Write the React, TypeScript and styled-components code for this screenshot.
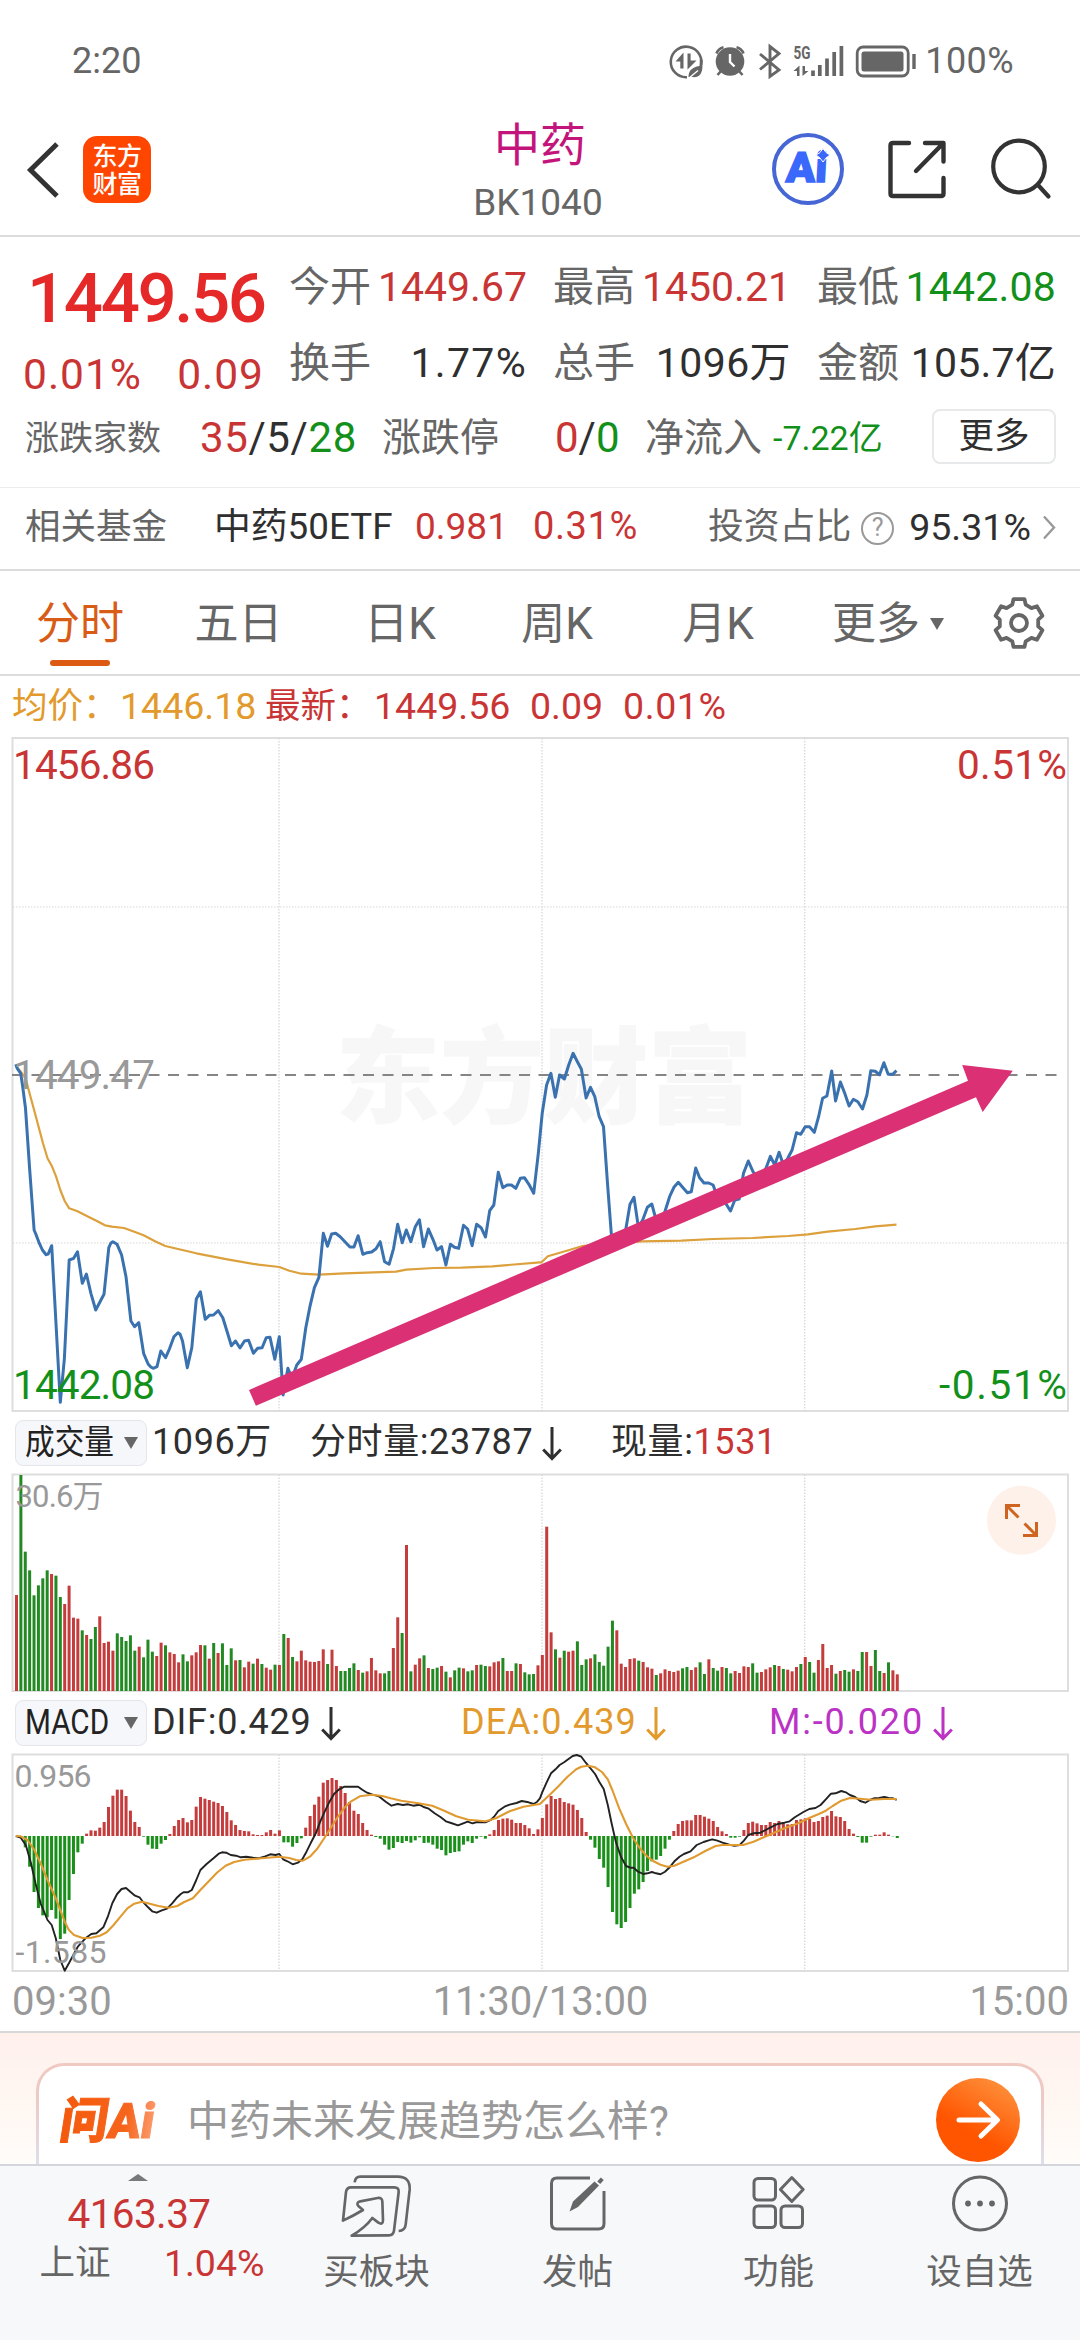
import React from "react";
import styled, { createGlobalStyle } from "styled-components";

const RED = "#c93434";
const GREEN = "#12901a";
const DARK = "#2f2f2f";
const GREY = "#666";
const MUTE = "#999";
const ORANGE = "#e29a2c";
const FONT = `Roboto, "Noto Sans CJK SC", sans-serif`;

const GlobalStyle = createGlobalStyle`
  * { box-sizing: border-box; }
  body { margin: 0; background: #fff; font-family: ${FONT}; }
  svg { display: block; }
`;

/* ---------- shared ---------- */

const Screen = styled.div`
  width: 1080px;
  height: 2340px;
  display: flex;
  flex-direction: column;
  background: #fff;
  color: ${DARK};
  overflow: hidden;
  white-space: nowrap;
  line-height: 1.2;
`;

interface InkProps {
  $c?: string;
  $size?: number;
  $ls?: number;
  $ml?: number;
  $w?: number;
}

const Ink = styled.span<InkProps>`
  color: ${(p) => p.$c ?? "inherit"};
  ${(p) => (p.$size ? `font-size: ${p.$size}px;` : "")}
  ${(p) => (p.$ls !== undefined ? `letter-spacing: ${p.$ls}px;` : "")}
  margin-left: ${(p) => p.$ml ?? 0}px;
  ${(p) => (p.$w ? `width: ${p.$w}px; flex: none;` : "")}
`;

/* ---------- status bar ---------- */

const StatusBar = styled.div`
  height: 100px;
  padding: 24px 66px 0 72px;
  display: flex;
  align-items: center;
  justify-content: space-between;
  color: ${GREY};
  font-size: 36px;
`;

const StatusIcons = styled.div`
  display: flex;
  align-items: center;
`;

const SystemIcons = () => (
  <svg width="254" height="40" viewBox="665 42 254 40" fill="none" stroke={GREY}>
    <path d="M700.5 67A15.3 15.3 0 1 0 687 77.200M701 65V58" strokeWidth="2.600" />
    <path d="M701.300 60A15.400 15.400 0 0 1 701 65" strokeWidth="2.600" />
    <path d="M675.500 61.500L683.500 52.500V68.500H680.300V61.500Z M687.500 53.500H690.600V60.500H696.500L687.500 69.500Z" fill={GREY} stroke="none" />
    <path d="M688.500 77C688.500 69 694 66.500 702.500 65.500C702.500 74 699 78 692 77Z" fill={GREY} stroke="none" />
    <path d="M688.500 78.500L698 70.500" stroke="#fff" strokeWidth="1.300" />
    <circle cx="730" cy="61.500" r="14.300" fill={GREY} stroke="none" />
    <path d="M716.500 53.500A10 10 0 0 1 723.500 47.200M743.500 53.500A10 10 0 0 0 736.500 47.200M721 71L717.500 75M739 71L742.500 75" strokeWidth="2.600" />
    <path d="M730 54V62L734.500 66.500" stroke="#fff" strokeWidth="2.400" />
    <path d="M760 54L779 70L770 76.500V46.500L779 53.500L760 69.500" strokeWidth="2.900" />
    <text x="793.500" y="59" fontFamily={FONT} fontSize="18.500" fontWeight="700" fill={GREY} stroke="none" textLength="17" lengthAdjust="spacingAndGlyphs">5G</text>
    <path d="M793.500 71L799.500 65.500V76H797V71Z M802.500 66H805V71H808.500L802.500 76Z" fill={GREY} stroke="none" />
    <path d="M813 70.500V76M819.800 65V76M827 58.500V76M834.200 52V76M841.400 46V76" strokeWidth="3.700" />
    <rect x="857.200" y="47" width="51" height="29" rx="6" strokeWidth="2.800" />
    <rect x="861.500" y="51.500" width="42" height="20" rx="2.500" fill={GREY} stroke="none" />
    <path d="M914 54V69" strokeWidth="3.400" />
  </svg>
);

/* ---------- header ---------- */

const Header = styled.header`
  height: 137px;
  border-bottom: 2px solid #dcdcdc;
  display: grid;
  grid-template-columns: 380px 1fr 380px;
`;

const HeaderSide = styled.div<{ $end?: boolean }>`
  display: flex;
  align-items: center;
  height: 137px;
  justify-content: ${(p) => (p.$end ? "flex-end" : "flex-start")};
  padding: ${(p) => (p.$end ? "0 28px 0 0" : "2px 0 0 24px")};
  gap: ${(p) => (p.$end ? 42 : 20)}px;
`;

const TitleStack = styled.div`
  padding-top: 16px;
  display: flex;
  flex-direction: column;
  align-items: center;
`;

const Title = styled.div`
  font-size: 46px;
  line-height: 58px;
  color: #c3147c;
`;

const Code = styled.div`
  font-size: 37px;
  line-height: 58px;
  color: ${GREY};
  margin-left: -4px;
`;

const AppBadge = styled.div`
  width: 68px;
  height: 67px;
  border-radius: 14px;
  background: #ff4600;
  color: #fff;
  display: flex;
  flex-direction: column;
  justify-content: center;
  align-items: center;
  font-size: 25px;
  line-height: 28px;
  font-weight: 500;
  letter-spacing: -0.5px;
  padding-top: 3px;
`;

const BackIcon = () => (
  <svg width="39" height="58" viewBox="0 0 39 58" fill="none" stroke="#333" strokeWidth="5">
    <path d="M33 3L6.500 29L33 55" />
  </svg>
);

const AiIcon = () => (
  <svg width="72" height="72" viewBox="0 0 72 72">
    <circle cx="36" cy="36" r="34" fill="none" stroke="#4566d4" strokeWidth="4" />
    <g transform="translate(13.500 49) skewX(-3)">
      <text x="0" y="0" fontFamily={FONT} fontSize="42" fontWeight="900" fill="#3a68fb" stroke="#3a68fb" strokeWidth="1.500" textLength="41" lengthAdjust="spacingAndGlyphs">Ai</text>
    </g>
    <path d="M51 15.500L54 19.500L58 22L54 25L51 29L48 25L44 22L48 19.500Z" fill="#3a68fb" stroke="#fff" strokeWidth="1" />
  </svg>
);

const ShareIcon = () => (
  <svg width="62" height="62" viewBox="0 0 62 62" fill="none" stroke="#333" strokeWidth="4.400" strokeLinecap="round" strokeLinejoin="round">
    <path d="M23 5H7Q4.500 5 4.500 7.500V55.500Q4.500 58 7 58H55Q57.500 58 57.500 55.500V40" />
    <path d="M39 5H57.500V23.500M57 5.500L30 33" />
  </svg>
);

const SearchIcon = () => (
  <svg width="62" height="62" viewBox="0 0 62 62" fill="none" stroke="#333" strokeWidth="4.200" strokeLinecap="round">
    <circle cx="29" cy="28.500" r="25.800" />
    <path d="M48 47L58.500 58.500" />
  </svg>
);

/* ---------- quote panel ---------- */

const Quote = styled.section`
  height: 251px;
  padding: 13px 24px 0 25px;
  border-bottom: 1px solid #ececec;
`;

const QuoteTop = styled.div`
  display: grid;
  grid-template-columns: 264px 1fr;
  height: 151px;
`;

const PriceBlock = styled.div`
  padding-top: 11px;
  color: ${RED};
`;

const Price = styled.div`
  height: 76px;
  line-height: 76px;
  margin-left: 2px;
  font-size: 69px;
  font-weight: 500;
  color: #e52828;
  letter-spacing: -2.400px;
`;

const Change = styled.div`
  width: 241px;
  margin-left: -2px;
  display: flex;
  justify-content: space-between;
  font-size: 42.500px;
  line-height: 75px;
  letter-spacing: 1px;
`;

const Stats = styled.div`
  display: grid;
  grid-template-columns: 238px 238px 239px;
  column-gap: 26px;
  grid-auto-rows: 75.500px;
`;

const Stat = styled.div<{ $c: string }>`
  display: flex;
  justify-content: space-between;
  align-items: center;
  font-size: 41px;
  color: ${(p) => p.$c};
`;

const StatLabel = styled.span`
  font-size: 41px;
  color: ${GREY};
`;

const Breadth = styled.div`
  display: grid;
  grid-template-columns: 175px 182px 173px 90px 128px 159px 124px;
  align-items: center;
  height: 74px;
  font-size: 42px;
`;

const BreadthLabel = styled.span<{ $size: number }>`
  font-size: ${(p) => p.$size}px;
  color: ${GREY};
`;

const MoreButton = styled.button`
  height: 55px;
  border: 2px solid #e8e9eb;
  border-radius: 8px;
  background: #fff;
  font-family: inherit;
  font-size: 35.500px;
  line-height: 50px;
  color: ${DARK};
  padding: 0;
  margin-top: -4px;
`;

/* ---------- fund row ---------- */

const Fund = styled.section`
  height: 83px;
  border-bottom: 2px solid #dcdcdc;
  padding: 0 23px 3px 25px;
  display: flex;
  align-items: center;
  font-size: 37.500px;
`;

const HelpIcon = styled.span`
  width: 33px;
  height: 33px;
  margin: 3px 0 0 10px;
  border: 2.500px solid ${MUTE};
  border-radius: 50%;
  color: ${MUTE};
  font-size: 25px;
  line-height: 28px;
  text-align: center;
`;

/* ---------- period tabs ---------- */

const Tabs = styled.nav`
  height: 105px;
  border-bottom: 2px solid #dcdcdc;
  display: grid;
  grid-template-columns: 160px 157px 166px 148px 174px 166px 1fr;
  font-size: 44px;
  color: ${GREY};
`;

const Tab = styled.div<{ $active?: boolean }>`
  height: 103px;
  display: flex;
  flex-direction: column;
  align-items: center;
  color: ${(p) => (p.$active ? "#d85c16" : GREY)};
  line-height: 106px;
  &::after {
    content: "";
    display: ${(p) => (p.$active ? "block" : "none")};
    width: 60px;
    height: 6px;
    margin-top: -17px;
    border-radius: 3px;
    background: #dc5a14;
  }
`;

const MoreTab = styled.div`
  display: flex;
  align-items: center;
  justify-content: center;
  gap: 10px;
  height: 103px;
  line-height: 103px;
  padding-top: 3px;
`;

const Caret = styled.i<{ $w: number; $h: number; $up?: boolean; $c?: string }>`
  width: 0;
  height: 0;
  border-left: ${(p) => p.$w / 2}px solid transparent;
  border-right: ${(p) => p.$w / 2}px solid transparent;
  ${(p) => (p.$up ? "border-bottom" : "border-top")}: ${(p) => p.$h}px solid ${(p) => p.$c ?? GREY};
`;

const GearSlot = styled.div`
  padding-top: 23px;
  padding-left: 19px;
`;

const gearOutline = (() => {
  const pts: string[] = [];
  for (let i = 0; i < 6; i++) {
    const steps: [number, number][] = [[-20, 19.5], [-13, 24.5], [13, 24.5], [20, 19.5]];
    for (const [off, r] of steps) {
      const a = ((i * 60 - 90 + off) * Math.PI) / 180;
      pts.push(`${(29 + r * Math.cos(a)).toFixed(1)},${(29 + r * Math.sin(a)).toFixed(1)}`);
    }
  }
  return pts.join(" ");
})();

const GearIcon = () => (
  <svg width="58" height="58" viewBox="0 0 58 58" fill="none" stroke={GREY} strokeWidth="3.800" strokeLinejoin="round">
    <polygon points={gearOutline} />
    <circle cx="29" cy="29" r="8" />
  </svg>
);

/* ---------- chart legend ---------- */

const Legend = styled.div`
  height: 61px;
  padding: 0 0 0 12px;
  display: flex;
  align-items: center;
  font-size: 37.500px;
  color: ${RED};
`;

const IndicatorBar = styled.div<{ $h: number }>`
  height: ${(p) => p.$h}px;
  padding: 0 0 0 15px;
  display: flex;
  align-items: center;
  font-size: 36px;
  letter-spacing: 0.600px;
`;

const Picker = styled.div`
  width: 132px;
  height: 46px;
  margin-right: 5px;
  flex: none;
  display: flex;
  align-items: center;
  justify-content: space-between;
  padding: 0 8px 0 9px;
  border: 1.500px solid #e4e6ea;
  border-radius: 8px;
  background: #f6f7fa;
  color: #222;
`;

const PickerLabel = styled.span`
  width: 88px;
  font-size: 34.500px;
  letter-spacing: 0;
  transform: scaleX(0.86);
  transform-origin: left center;
`;

const Reading = styled.div<{ $w: number; $c?: string; $ls?: number }>`
  width: ${(p) => p.$w}px;
  display: flex;
  align-items: center;
  color: ${(p) => p.$c ?? DARK};
  letter-spacing: ${(p) => p.$ls ?? 0.6}px;
`;

const ArrowSvg = styled.svg`
  margin-left: 9px;
  margin-top: 2px;
`;

const DownArrow = () => (
  <ArrowSvg width="20" height="36" viewBox="0 0 20 36" fill="none" stroke="currentColor" strokeWidth="3">
    <path d="M10 1V32M1.200 23.500L10 32.500L18.800 23.500" />
  </ArrowSvg>
);

/* ---------- chart data ---------- */

type Scale = { x0: number; kx: number };
const LEFT: Scale = { x0: 0, kx: 2.904 };
const RIGHT: Scale = { x0: 540, kx: 2.904 };
const RIGHT_PRICE: Scale = { x0: 460, kx: 2.529 };

const toPoints = (raw: string, s: Scale, dy: number) =>
  raw
    .trim()
    .split(/\s+/)
    .map((p) => {
      const [x, y] = p.split(",").map(Number);
      return `${(s.x0 + x / s.kx).toFixed(1)},${(dy + y / 3).toFixed(1)}`;
    })
    .join(" ");

const PRICE_A = `46,193 50,205 60,220 66,260 74,325 86,505 99,690 104,702 113,727 123,750 134,764 140,762 150,737 162,960 175,1207 187,1075 201,780 214,775 225,755 239,850 251,822 264,880 278,930 302,883 316,743 322,729 328,725 340,733 353,765 366,830 380,963 391,980 403,968 417,1060 430,1092 438,1101 445,1105 456,1100 467,1053 481,1073 492,1047 505,1010 517,998 523,1003 530,1023 544,1103 557,1043 570,897 582,875 596,958 608,946 620,945 634,932 647,953 660,997 672,1037 684,1023 697,1044 710,1023 722,1021 736,1060 748,1045 761,1043 773,1013 784,1012 798,1078 811,1010 822,1185 836,1105 848,1135 862,1095 875,1078 888,983 900,920 913,863 926,832 939,700 951,739 963,702 975,700 988,710 1003,727 1016,741 1028,741 1040,707 1054,763 1066,758 1079,756 1092,746 1104,725 1117,785 1130,793 1143,745 1155,673 1168,728 1180,690 1193,725 1206,680 1218,659 1230,740 1244,687 1257,718 1269,750 1282,740 1295,795 1308,733 1320,742 1332,745 1346,676 1358,687 1371,737 1384,673 1397,683 1410,711 1422,632 1434,615 1447,517 1460,563 1473,555 1485,555 1498,565 1511,535 1523,533 1536,553 1550,580`;
const PRICE_B = `198,460 208,340 219,255 230,220 241,292 252,225 264,237 275,195 286,160 297,185 307,208 319,294 330,262 341,290 352,350 363,380 373,550 383,705 395,730 407,725 419,690 430,613 440,592 451,680 462,660 474,622 485,612 496,660 508,665 519,632 530,590 541,562 552,547 563,562 575,578 585,575 596,504 606,533 617,549 629,549 640,555 651,590 662,600 673,612 684,633 695,600 706,597 717,520 729,483 741,515 752,530 763,530 774,505 785,469 796,495 807,457 818,495 829,475 840,450 851,398 862,403 873,380 884,380 896,397 907,350 917,295 928,288 940,213 950,303 962,246 973,280 984,318 995,298 1006,305 1018,327 1029,285 1039,212 1050,214 1061,224 1072,188 1083,223 1094,223 1104,212`;
const AVG_A = `46,197 60,215 74,235 99,330 125,430 138,475 150,497 163,530 175,570 188,603 201,625 225,634 252,648 280,662 305,676 325,680 360,684 390,695 417,706 450,724 480,738 520,748 570,760 660,778 750,794 811,801 840,812 875,821 926,824 1000,820 1150,815 1180,809 1260,804 1340,803 1430,799 1568,787`;
const AVG_B = `206,787 222,769 270,752 310,738 370,730 460,724 560,722 640,717 740,714 830,708 880,703 930,695 1000,687 1050,679 1104,674`;

const DIF_A = `46,438 60,443 75,465 90,520 103,580 118,640 138,690 150,705 162,745 175,810 188,842 200,820 226,770 250,743 265,732 280,730 300,712 313,680 326,640 340,612 353,597 366,594 380,607 392,617 405,622 417,638 430,652 442,664 455,668 468,662 485,656 500,640 512,625 525,612 533,607 545,607 557,600 570,570 582,540 600,522 620,505 635,491 645,487 657,488 670,495 685,497 700,502 715,500 735,503 750,505 770,499 785,493 800,495 811,492 822,508 835,514 850,523 865,518 878,508 890,485 902,460 917,430 930,395 943,365 957,335 970,312 985,298 1000,290 1020,290 1040,290 1052,299 1066,308 1080,313 1100,319 1120,335 1137,347 1155,342 1170,345 1185,343 1200,347 1218,344 1230,351 1245,356 1262,370 1280,382 1295,394 1310,399 1330,406 1345,400 1358,395 1372,400 1385,396 1410,397 1425,390 1435,380 1447,363 1465,350 1480,344 1500,339 1515,333 1535,337 1550,342 1560,335 1568,325`;
const DIF_B = `6,308 18,280 32,250 45,238 57,225 70,217 82,208 95,198 107,195 120,200 133,218 145,233 160,252 172,275 185,297 197,345 208,400 220,455 235,500 250,528 262,533 272,533 285,545 300,552 312,550 325,546 337,550 350,553 363,545 378,530 392,512 405,500 418,492 437,484 455,465 475,456 490,451 500,448 515,452 530,458 550,464 565,467 580,465 592,452 605,435 620,430 640,428 655,420 670,412 690,402 710,398 725,394 740,382 765,366 782,357 800,354 815,345 832,326 845,311 858,310 875,303 888,307 900,315 915,321 930,333 945,338 958,330 970,325 985,324 1000,321 1012,324 1025,325 1036,330`;
const DEA_A = `46,438 60,439 80,450 100,480 120,525 138,570 160,620 175,660 188,695 200,720 215,735 240,744 265,743 290,737 310,727 330,705 350,680 370,655 390,641 412,635 435,641 460,648 490,653 515,648 535,636 560,625 580,602 605,575 630,548 655,527 680,516 710,509 760,505 811,500 840,504 860,510 880,512 900,500 920,478 940,447 960,415 980,382 1000,353 1020,334 1045,319 1080,314 1110,318 1135,325 1165,332 1215,340 1255,347 1285,360 1325,379 1360,389 1410,394 1440,385 1480,364 1520,350 1568,342`;
const DEA_B = `10,332 30,313 55,287 80,260 105,238 120,230 140,227 160,232 180,246 197,268 210,300 230,355 250,402 270,443 290,475 310,498 330,514 350,524 370,530 390,527 420,514 450,500 480,483 510,468 530,465 590,465 620,455 650,442 680,428 710,415 750,400 780,385 810,372 830,362 850,348 875,332 900,324 930,326 960,329 1000,327 1036,327`;

const VOLUME = `r585 g225 g455 g511 g586 g556 g535 g511 r522 g527 g591 r612 r557 r653 r656 g691 r705 g717 g681 r649 r729 r725 r752 g700 g711 g723 g706 g752 r740 g772 g719 g755 r768 r728 g736 r757 r762 r787 g763 g784 r766 r757 r735 g736 r776 g729 r759 g730 g795 g745 r781 g780 r802 r785 g791 r776 g792 r803 r809 g794 r795 g702 r714 g771 r784 r752 r781 r785 r786 r783 r748 g792 r749 r798 g813 g813 g804 g790 r810 g818 r814 r774 r811 r820 g820 g813 r744 r652 g699 r435 g814 r794 r775 g766 r804 g807 g803 r798 g815 r832 g811 g803 r805 g814 g811 r795 g794 g798 r799 r787 r784 g774 r813 r813 g790 r792 g817 g823 g822 r796 r765 r380 r697 g748 r773 g752 r755 r752 g724 g795 g778 r775 g763 g786 g797 g740 g662 r691 r791 r801 r777 r775 g782 r786 r802 r806 g825 r820 r808 r813 r816 r812 g805 g801 r810 r802 g787 g822 r778 g804 g812 r801 g804 g820 r813 r819 r799 r801 g790 g818 r816 r808 r802 g795 r798 g807 r809 r814 r801 g792 r771 g786 g818 r780 r732 r804 r795 g821 r813 g810 g815 r808 g813 g756 r756 r798 g750 g813 r819 g787 r811 r823`.split(" ");

const MACD = [
  438, 444, 472, 530, 606, 654, 676, 682, 660, 686, 747, 731, 630, 552, 487, 461, 431, 421, 422, 413, 396, 351, 317, 299, 299, 318, 362, 396, 411, 440,
  464, 476, 477, 461, 450, 432, 408, 390, 384, 397, 390, 350, 321, 326, 330, 335, 339, 348, 366, 391, 405, 420, 423, 424, 433, 435, 435, 427, 420, 431,
  421, 457, 457, 470, 459, 445, 413, 378, 344, 320, 278, 270, 264, 270, 288, 309, 336, 362, 372, 399, 420, 434, 441, 446, 464, 479, 474, 456, 459, 453,
  458, 451, 442, 459, 458, 464, 476, 480, 496, 489, 486, 484, 464, 454, 459, 446, 440, 446, 433, 420, 390, 386, 385, 389, 399, 399, 405, 415, 432, 418,
  384, 343, 318, 327, 324, 336, 340, 344, 360, 384, 426, 449, 473, 507, 533, 591, 666, 703, 714, 696, 654, 611, 598, 576, 543, 514, 509, 498, 476, 449,
  423, 402, 393, 391, 391, 375, 375, 380, 386, 393, 411, 424, 432, 443, 443, 440, 420, 399, 395, 400, 405, 405, 396, 399, 393, 400, 403, 402, 390, 388,
  385, 387, 396, 393, 381, 377, 363, 379, 381, 393, 417, 431, 441, 458, 458, 440, 434, 434, 427, 434, 439, 444,
];

const barX = (i: number) => 16.5 + i * 4.382;
const GRID_X = [279, 542, 804.7];

const Frame = ({ top, bottom }: { top: number; bottom: number }) => (
  <g fill="none">
    <rect x="12.500" y={top} width="1055.500" height={bottom - top} stroke="#dedede" strokeWidth="2" />
    {GRID_X.map((x) => (
      <path key={x} d={`M${x} ${top}V${bottom}`} stroke="#d4d4d4" strokeWidth="1.200" strokeDasharray="1.500 1.500" />
    ))}
  </g>
);

interface LabelProps {
  x: number;
  y: number;
  w: number;
  size: number;
  fill: string;
  children: string;
}

const ChartLabel = ({ x, y, w, size, fill, children }: LabelProps) => (
  <text x={x} y={y} textLength={w} fontFamily={FONT} fontSize={size} fill={fill}>
    {children}
  </text>
);

const PriceChart = () => (
  <svg width="1080" height="675" viewBox="0 737 1080 675">
    <text x="336" y="1115" fontFamily={FONT} fontSize="104" fontWeight="900" fill="#f7f7f7" stroke="#f7f7f7" strokeWidth="1" textLength="416">
      东方财富
    </text>
    <Frame top={738} bottom={1411} />
    <path d="M13 907H1068M13 1243H1068" stroke="#d8d8d8" strokeWidth="1.200" strokeDasharray="1.500 1.500" />
    <path d="M12 1075H1060" stroke="#858585" strokeWidth="2" strokeDasharray="11 8.500" />
    <polyline points={`${toPoints(AVG_A, LEFT, 1000)} ${toPoints(AVG_B, RIGHT_PRICE, 1000)}`} fill="none" stroke="#dca03c" strokeWidth="2.200" strokeLinejoin="round" />
    <polyline points={`${toPoints(PRICE_A, LEFT, 1000)} ${toPoints(PRICE_B, RIGHT_PRICE, 1000)}`} fill="none" stroke="#3a72b0" strokeWidth="3" strokeLinejoin="round" />
    <ChartLabel x={13} y={779} w={142} size={40.5} fill={RED}>1456.86</ChartLabel>
    <ChartLabel x={957} y={779} w={110} size={40.5} fill={RED}>0.51%</ChartLabel>
    <ChartLabel x={13} y={1089} w={142} size={40.5} fill={MUTE}>1449.47</ChartLabel>
    <ChartLabel x={13} y={1399} w={142} size={40.5} fill={GREEN}>1442.08</ChartLabel>
    <ChartLabel x={939} y={1399} w={128} size={40.5} fill={GREEN}>-0.51%</ChartLabel>
    <polygon points="249,1390 968,1080.700 962.200,1065 1012.800,1070.700 982.700,1112 976,1097.300 255.900,1405.700" fill="#db3174" />
  </svg>
);

const VolumeChart = () => (
  <svg width="1080" height="219" viewBox="0 1473 1080 219">
    <Frame top={1474.5} bottom={1691} />
    {VOLUME.map((v, i) => {
      const h = (873 - Number(v.slice(1))) / 3;
      return <rect key={i} x={barX(i) - 1.5} y={1691 - h} width="3" height={h} fill={v[0] === "r" ? "#c43c3c" : "#238a23"} />;
    })}
    <ChartLabel x={15.5} y={1506.5} w={88} size={31} fill={MUTE}>30.6万</ChartLabel>
    <circle cx="1021.500" cy="1520.300" r="34.500" fill="#fef1e9" />
    <g fill="none" stroke="#cf6420" strokeWidth="3">
      <path d="M1020 1505.500H1006.500V1519M1007 1506L1018.500 1517.500" />
      <path d="M1023 1535.500H1036.500V1522M1036 1535L1024.500 1523.500" />
    </g>
  </svg>
);

const MacdChart = () => (
  <svg width="1080" height="219" viewBox="0 1753 1080 219">
    <Frame top={1754.5} bottom={1971} />
    {MACD.map((v, i) => {
      const h = Math.abs(v - 438) / 3;
      return <rect key={i} x={barX(i) - 1.5} y={v < 438 ? 1836 - h : 1836} width="3" height={h} fill={v < 438 ? "#c43c3c" : "#1a901a"} />;
    })}
    <polyline points={`${toPoints(DIF_A, LEFT, 1690)} ${toPoints(DIF_B, RIGHT, 1690)}`} fill="none" stroke="#222" strokeWidth="1.900" strokeLinejoin="round" />
    <polyline points={`${toPoints(DEA_A, LEFT, 1690)} ${toPoints(DEA_B, RIGHT, 1690)}`} fill="none" stroke="#e09a30" strokeWidth="2.100" strokeLinejoin="round" />
    <ChartLabel x={14.5} y={1786.5} w={77} size={32} fill={MUTE}>0.956</ChartLabel>
    <ChartLabel x={15.5} y={1962.5} w={91} size={32} fill={MUTE}>-1.585</ChartLabel>
  </svg>
);

const TimeAxis = styled.div`
  height: 61px;
  padding: 0 11px 0 12px;
  border-bottom: 2px solid #d8d8d8;
  display: grid;
  grid-template-columns: 1fr auto 1fr;
  align-items: center;
  font-size: 40px;
  color: ${MUTE};
  & > :last-child { text-align: right; }
`;

/* ---------- AI prompt ---------- */

const AskSection = styled.section`
  height: 131px;
  padding: 30px 36px 0;
  overflow: hidden;
  background: linear-gradient(#fff0ec, #fff7f2 55%, #fffcf9);
`;

const AskBorder = styled.div`
  height: 128px;
  padding: 3px;
  border-radius: 28px;
  background: linear-gradient(#f0c9c1, #eccac6 30%, #dddfec 80%);
`;

const AskBox = styled.div`
  height: 122px;
  padding: 0 21px 0 12px;
  border-radius: 25px;
  background: #fff;
  display: flex;
  align-items: flex-start;
`;

const AskText = styled.div`
  flex: 1;
  margin-left: 18px;
  font-size: 42px;
  line-height: 112px;
  color: ${MUTE};
`;

const SendButton = styled.div`
  width: 84px;
  height: 84px;
  margin-top: 12px;
  border-radius: 50%;
  background: linear-gradient(210deg, #ff9540 5%, #ff5500 62%);
`;

const AskLogo = () => (
  <svg width="118" height="110" viewBox="0 0 118 110">
    <defs>
      <linearGradient id="ask" x1="0" y1="0" x2="1" y2="0">
        <stop offset="0" stopColor="#f4590c" />
        <stop offset="0.700" stopColor="#f6651c" />
        <stop offset="1" stopColor="#fb9a6c" />
      </linearGradient>
    </defs>
    <g transform="translate(7 72) skewX(-9)">
      <text x="0" y="0" fontFamily={FONT} fontSize="49" fontWeight="900" fill="url(#ask)" stroke="url(#ask)" strokeWidth="1" textLength="94" lengthAdjust="spacingAndGlyphs">
        问Ai
      </text>
    </g>
  </svg>
);

/* ---------- bottom bar ---------- */

const BottomBar = styled.footer`
  flex: 1;
  border-top: 2px solid #d3d7dc;
  background: #f7f8fa;
  display: grid;
  grid-template-columns: 276px 201px 201px 201px 201px;
`;

const IndexCell = styled.div`
  display: flex;
  flex-direction: column;
  align-items: center;
  padding-top: 8px;
  color: ${RED};
  font-size: 40.500px;
`;

const IndexValue = styled.div`
  line-height: 52px;
  margin: 7px 0 0 2px;
  letter-spacing: -0.600px;
`;

const IndexRow = styled.div`
  width: 225px;
  margin-left: 28px;
  display: flex;
  justify-content: space-between;
  align-items: center;
  font-size: 37.500px;
  line-height: 47px;
`;

const Action = styled.div`
  display: flex;
  flex-direction: column;
  align-items: center;
  font-size: 35.500px;
  line-height: 52px;
  color: ${GREY};
`;

const IconSlot = styled.div`
  height: 80px;
  padding-top: 7px;
`;

const iconProps = { fill: "none", stroke: GREY, strokeWidth: 3, strokeLinejoin: "round" as const };

const TradeIcon = () => (
  <svg width="72" height="66" viewBox="958 335 216 198" {...iconProps} strokeWidth={8}>
    <path d="M964 478L973 392Q975 378 988 378H1118Q1132 378 1131 392L1117 508Q1115 522 1102 522L990 523Q1030 500 1052 470L1070 484Q1084 492 1084 476L1082 420Q1081 408 1068 410L1016 420Q1002 424 1010 434L1024 446Q994 464 964 478Z" />
    <path d="M999 363Q1001 346 1016 346H1128Q1166 346 1164 385L1152 490Q1150 508 1131 509" />
  </svg>
);

const PostIcon = () => (
  <svg width="60" height="60" viewBox="0 0 60 60" {...iconProps}>
    <path d="M42 5H9Q3.500 5 3.500 10.500V50.500Q3.500 56 9 56H50.500Q56 56 56 50.500V18" />
    <path d="M21.500 38.500L25 28.500L46.500 8.500L51 12.500L30 34Z" fill={GREY} stroke="none" />
    <path d="M51 6.500L54 9" strokeWidth="5.500" />
  </svg>
);

const FeatureIcon = () => (
  <svg width="60" height="60" viewBox="0 0 60 60" {...iconProps}>
    <rect x="5" y="5.500" width="21.500" height="21.500" rx="4" />
    <rect x="5" y="33" width="21.500" height="21.500" rx="4" />
    <rect x="32" y="33" width="21.500" height="21.500" rx="4" />
    <path d="M42.800 4.500L54.200 16.500L42.800 28.500L31.400 16.500Z" />
  </svg>
);

const DotsIcon = () => (
  <svg width="60" height="60" viewBox="0 0 60 60" {...iconProps}>
    <circle cx="30" cy="30.500" r="26.500" />
    <g fill={GREY} stroke="none">
      <circle cx="18" cy="30.500" r="2.900" />
      <circle cx="30" cy="30.500" r="2.900" />
      <circle cx="42" cy="30.500" r="2.900" />
    </g>
  </svg>
);

const ChevronSvg = styled.svg`
  margin-left: auto;
`;

const stats: [string, string, string, number][] = [
  ["今开", "1449.67", RED, 0],
  ["最高", "1450.21", RED, 0],
  ["最低", "1442.08", GREEN, 0.2],
  ["换手", "1.77%", DARK, 1.3],
  ["总手", "1096万", DARK, 0.4],
  ["金额", "105.7亿", DARK, 0.2],
];

const actions: [string, () => React.JSX.Element][] = [
  ["买板块", TradeIcon],
  ["发帖", PostIcon],
  ["功能", FeatureIcon],
  ["设自选", DotsIcon],
];

export default function App() {
  return (
    <Screen>
      <GlobalStyle />
      <StatusBar>
        <span>2:20</span>
        <StatusIcons>
          <SystemIcons />
          <Ink $ml={6} $ls={0.4}>100%</Ink>
        </StatusIcons>
      </StatusBar>

      <Header>
        <HeaderSide>
          <BackIcon />
          <AppBadge>
            <span>东方</span>
            <span>财富</span>
          </AppBadge>
        </HeaderSide>
        <TitleStack>
          <Title>中药</Title>
          <Code>BK1040</Code>
        </TitleStack>
        <HeaderSide $end>
          <AiIcon />
          <ShareIcon />
          <SearchIcon />
        </HeaderSide>
      </Header>

      <Quote>
        <QuoteTop>
          <PriceBlock>
            <Price>1449.56</Price>
            <Change>
              <span>0.01%</span>
              <span>0.09</span>
            </Change>
          </PriceBlock>
          <Stats>
            {stats.map(([label, value, color, spacing]) => (
              <Stat key={label} $c={color}>
                <StatLabel>{label}</StatLabel>
                <Ink $ls={spacing}>{value}</Ink>
              </Stat>
            ))}
          </Stats>
        </QuoteTop>
        <Breadth>
          <BreadthLabel $size={34}>涨跌家数</BreadthLabel>
          <Ink $ls={0.6}>
            <Ink $c={RED}>35</Ink>/5/<Ink $c={GREEN}>28</Ink>
          </Ink>
          <BreadthLabel $size={39}>涨跌停</BreadthLabel>
          <span>
            <Ink $c={RED}>0</Ink>/<Ink $c={GREEN}>0</Ink>
          </span>
          <BreadthLabel $size={39}>净流入</BreadthLabel>
          <Ink $c={GREEN} $size={34}>-7.22亿</Ink>
          <MoreButton>更多</MoreButton>
        </Breadth>
      </Quote>

      <Fund>
        <Ink $c={GREY} $size={35.5} $w={189}>相关基金</Ink>
        <Ink $size={36.8} $w={201}>中药50ETF</Ink>
        <Ink $c={RED} $size={37} $w={118}>0.981</Ink>
        <Ink $c={RED} $size={38} $ls={0.6} $w={175}>0.31%</Ink>
        <Ink $c={GREY} $size={35.8}>投资占比</Ink>
        <HelpIcon>?</HelpIcon>
        <Ink $ml={15}>95.31%</Ink>
        <ChevronSvg width="16" height="26" viewBox="0 0 16 26" fill="none" stroke={MUTE} strokeWidth="2.400">
          <path d="M3 2.500L13 13.500L3 24.500" />
        </ChevronSvg>
      </Fund>

      <Tabs>
        <Tab $active>分时</Tab>
        <Tab>五日</Tab>
        <Tab>日K</Tab>
        <Tab>周K</Tab>
        <Tab>月K</Tab>
        <MoreTab>
          更多
          <Caret $w={15} $h={12} />
        </MoreTab>
        <GearSlot>
          <GearIcon />
        </GearSlot>
      </Tabs>

      <Legend>
        <Ink $c={ORANGE} $size={35.5} $w={108}>均价：</Ink>
        <Ink $c={ORANGE} $w={145}>1446.18</Ink>
        <Ink $size={35.5} $w={109}>最新：</Ink>
        <Ink $w={156}>1449.56</Ink>
        <Ink $w={93}>0.09</Ink>
        <Ink $ls={0.6}>0.01%</Ink>
      </Legend>
      <PriceChart />

      <IndicatorBar $h={61}>
        <Picker>
          <PickerLabel>成交量</PickerLabel>
          <Caret $w={15} $h={12} />
        </Picker>
        <Reading $w={158}>1096万</Reading>
        <Reading $w={301}>
          分时量:23787
          <DownArrow />
        </Reading>
        <Reading $w={200}>
          现量:<Ink $c={RED}>1531</Ink>
        </Reading>
      </IndicatorBar>
      <VolumeChart />

      <IndicatorBar $h={61}>
        <Picker>
          <PickerLabel>MACD</PickerLabel>
          <Caret $w={15} $h={12} />
        </Picker>
        <Reading $w={309} $ls={0.8}>
          DIF:0.429
          <DownArrow />
        </Reading>
        <Reading $w={308} $c={ORANGE} $ls={1}>
          DEA:0.439
          <DownArrow />
        </Reading>
        <Reading $w={240} $c="#bb33c4" $ls={1.8}>
          M:-0.020
          <DownArrow />
        </Reading>
      </IndicatorBar>
      <MacdChart />
      <TimeAxis>
        <span>09:30</span>
        <span>11:30/13:00</span>
        <span>15:00</span>
      </TimeAxis>

      <AskSection>
        <AskBorder>
          <AskBox>
            <AskLogo />
            <AskText>中药未来发展趋势怎么样?</AskText>
            <SendButton>
              <svg width="84" height="84" viewBox="0 0 84 84" fill="none" stroke="#fff" strokeWidth="5" strokeLinecap="round" strokeLinejoin="round">
                <path d="M23 42H61M45 26L61.500 42L45 58" />
              </svg>
            </SendButton>
          </AskBox>
        </AskBorder>
      </AskSection>

      <BottomBar>
        <IndexCell>
          <Caret $w={21} $h={7} $up $c="#77797d" />
          <IndexValue>4163.37</IndexValue>
          <IndexRow>
            <Ink $c={GREY} $size={35.5}>上证</Ink>
            <span>1.04%</span>
          </IndexRow>
        </IndexCell>
        {actions.map(([label, Icon]) => (
          <Action key={label}>
            <IconSlot>
              <Icon />
            </IconSlot>
            {label}
          </Action>
        ))}
      </BottomBar>
    </Screen>
  );
}
